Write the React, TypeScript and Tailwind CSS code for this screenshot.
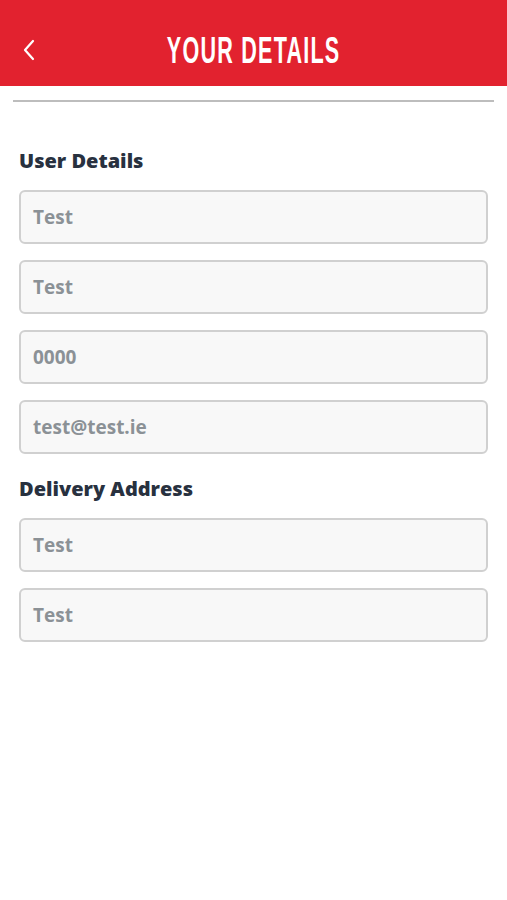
import React from "react";

const userFields = ["Test", "Test", "0000", "test@test.ie"];
const addressFields = ["Test", "Test"];

function Field({ value }: { value: string }) {
  return (
    <div className="flex h-[54px] items-center rounded-[6px] border-2 border-[#d0d0d0] bg-[#f8f8f8] px-[12px]">
      <span className="text-[19px] font-bold text-[#8b9196]">{value}</span>
    </div>
  );
}

export default function App() {
  return (
    <div
      className="min-h-[900px] w-full bg-white"
      style={{ fontFamily: '"Open Sans", "Noto Sans", sans-serif' }}
    >
      {/* header */}
      <header className="relative flex h-[86px] items-center justify-center bg-[#e2222f] pt-[16px]">
        <button className="absolute left-[20px] top-[38px] text-white">
          <svg width="18" height="24" viewBox="0 0 18 24" fill="none">
            <path d="M13 3 L5 12 L13 21" stroke="white" strokeWidth="2.2" strokeLinecap="round" strokeLinejoin="round" />
          </svg>
        </button>
        <h1
          className="scale-x-[0.6] text-[36px] font-bold leading-[40px] tracking-[2px] text-white"
          style={{ fontFamily: '"Liberation Sans", Arial, sans-serif' }}
        >
          YOUR DETAILS
        </h1>
      </header>

      <div className="mx-[13px] mt-[14px] h-[2px] bg-[#bdbdbd]" />

      <main className="px-[19px] pt-[47px]">
        <h2 className="text-[20px] font-extrabold leading-[24px] text-[#28313f]">User Details</h2>
        <div className="mt-[17px] flex flex-col gap-[16px]">
          {userFields.map((f, i) => (
            <Field key={i} value={f} />
          ))}
        </div>

        <h2 className="mt-[23px] text-[20px] font-extrabold leading-[24px] text-[#28313f]">Delivery Address</h2>
        <div className="mt-[17px] flex flex-col gap-[16px]">
          {addressFields.map((f, i) => (
            <Field key={i} value={f} />
          ))}
        </div>
      </main>
    </div>
  );
}
